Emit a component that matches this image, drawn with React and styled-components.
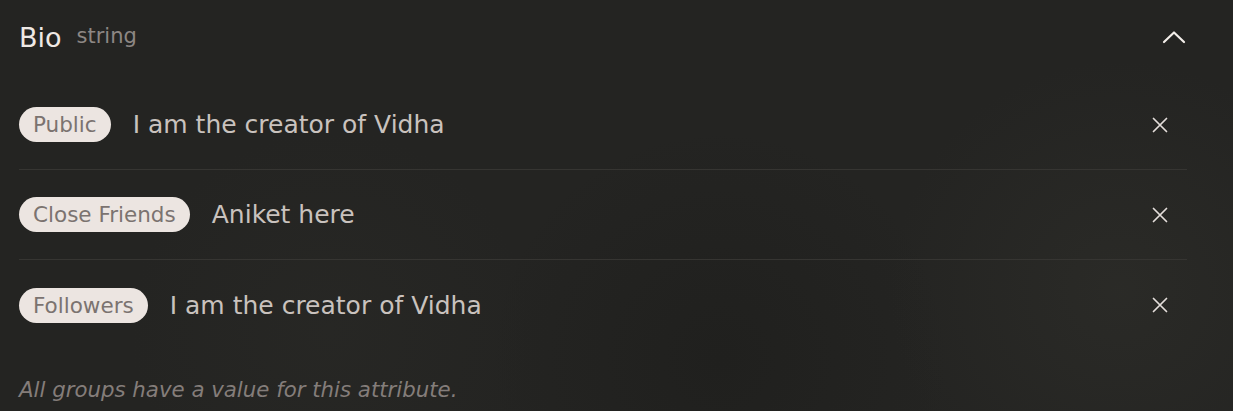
import React from "react";
import styled, { createGlobalStyle } from "styled-components";

const GlobalStyle = createGlobalStyle`
    html, body {
        margin: 0;
        padding: 0;
        background: #232321;
    }
    * {
        box-sizing: border-box;
    }
`;

const groups = [
    { id: "public", label: "Public", value: "I am the creator of Vidha" },
    { id: "close", label: "Close Friends", value: "Aniket here" },
    { id: "followers", label: "Followers", value: "I am the creator of Vidha" },
];

const ChevronUp = () => (
    <svg width="24" height="14" viewBox="0 0 24 14" fill="none">
        <path
            d="M2 12 L12 2.5 L22 12"
            stroke="#f3eeea"
            strokeWidth="2.2"
            strokeLinecap="round"
            strokeLinejoin="round"
        />
    </svg>
);

const CloseIcon = () => (
    <svg width="16" height="16" viewBox="0 0 16 16" fill="none">
        <path
            d="M1.5 1.5 L14.5 14.5 M14.5 1.5 L1.5 14.5"
            stroke="#e4dedb"
            strokeWidth="1.7"
            strokeLinecap="round"
        />
    </svg>
);

const App = () => {
    return (
        <React.Fragment>
            <GlobalStyle />
            <Panel>
                <Header>
                    <TitleBox>
                        <Title>Bio</Title>
                        <TypeName>string</TypeName>
                    </TitleBox>
                    <ToggleButton aria-label="collapse">
                        <ChevronUp />
                    </ToggleButton>
                </Header>
                <List>
                    {groups.map(group => (
                        <Row key={group.id}>
                            <Pill>{group.label}</Pill>
                            <Value>{group.value}</Value>
                            <RemoveButton aria-label="remove">
                                <CloseIcon />
                            </RemoveButton>
                        </Row>
                    ))}
                </List>
                <Note>All groups have a value for this attribute.</Note>
            </Panel>
        </React.Fragment>
    );
};

// μ μ²΄ ν¨λ
const Panel = styled.div`
    width: 1233px;
    height: 411px;
    overflow: hidden;
    padding: 0 46px 0 19px;
    font-family: "DejaVu Sans", "Liberation Sans", sans-serif;
    background:
        radial-gradient(circle at 1120px 290px, rgba(50, 50, 45, 0.45) 0, rgba(50, 50, 45, 0) 230px),
        radial-gradient(circle at 330px 330px, rgba(46, 46, 42, 0.3) 0, rgba(46, 46, 42, 0) 200px),
        radial-gradient(circle at 720px 360px, rgba(28, 28, 26, 0.5) 0, rgba(28, 28, 26, 0) 230px),
        #242422;
`;

// μ λͺ© + μ ‘κΈ° λ²νΌ
const Header = styled.div`
    height: 74px;
    display: flex;
    align-items: center;
    justify-content: space-between;
`;

const TitleBox = styled.div`
    display: flex;
    align-items: center;
    gap: 15px;
`;

const Title = styled.span`
    font-size: 27px;
    color: #efe9e5;
`;

const TypeName = styled.span`
    font-size: 21px;
    color: #8d8784;
    transform: translateY(-1px);
`;

const ToggleButton = styled.button`
    display: flex;
    align-items: center;
    justify-content: center;
    margin-right: 1px;
    padding: 0;
    border: none;
    background: none;
    cursor: pointer;
`;

const List = styled.div`
    margin-top: 6px;
`;

// κ·Έλ£Ήλ³ κ° ν μ€
const Row = styled.div`
    height: 90px;
    display: flex;
    align-items: center;
    border-bottom: 1px solid #363532;

    &:last-child {
        border-bottom: none;
    }
`;

const Pill = styled.span`
    flex-shrink: 0;
    height: 35px;
    padding: 0 14px;
    display: inline-flex;
    align-items: center;
    border-radius: 18px;
    background: #ece5e1;
    color: #7b7370;
    font-size: 21.5px;
`;

const Value = styled.span`
    flex: 1;
    margin-left: 22px;
    font-size: 25px;
    color: #c9c2be;
`;

const RemoveButton = styled.button`
    width: 40px;
    height: 40px;
    margin-right: 7px;
    display: flex;
    align-items: center;
    justify-content: center;
    padding: 0;
    border: none;
    background: none;
    cursor: pointer;
`;

const Note = styled.p`
    margin: 27px 0 0;
    font-size: 21.3px;
    font-style: italic;
    color: #847d7a;
`;

export default App;
